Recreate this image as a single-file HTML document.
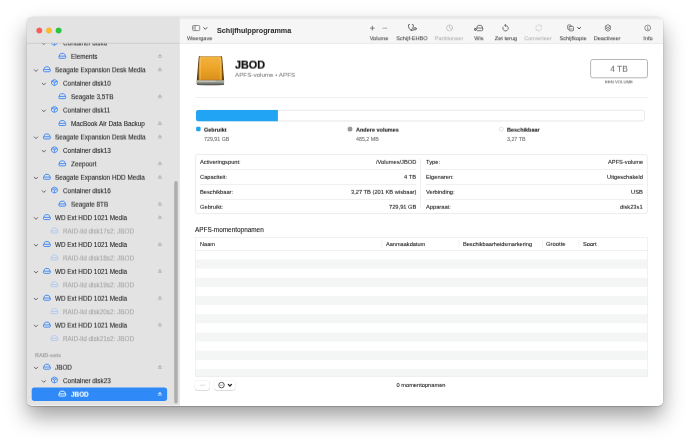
<!DOCTYPE html>
<html><head><meta charset="utf-8"><title>Schijfhulpprogramma</title>
<style>
html,body{margin:0;padding:0;background:#fff;}
body{width:690px;height:441px;position:relative;overflow:hidden;font-family:"Liberation Sans",sans-serif;-webkit-font-smoothing:antialiased;}
#clip div,#clip svg{position:absolute;}
#clip svg.L{left:0;top:0;overflow:hidden;pointer-events:none;}
.t{white-space:nowrap;}
</style></head><body>
<div style="position:absolute;left:26.7px;top:17.2px;width:636.30px;height:388.50px;border-radius:5px;box-shadow:0 0 0.6px 0.3px rgba(0,0,0,0.12),0 0.6px 0.7px rgba(0,0,0,0.13),0 11px 21px rgba(0,0,0,0.37),0 1px 4px rgba(0,0,0,0.05);background:#fff;"></div>
<div id="clip" style="position:absolute;left:0;top:0;width:690px;height:441px;clip-path:inset(17.2px 27.00px 35.30px 26.7px round 5px);">
<svg class="L" width="690" height="441" viewBox="0 0 690 441"><defs><filter id="bsh" x="-20%" y="-30%" width="140%" height="170%"><feGaussianBlur stdDeviation="0.55"/></filter></defs><rect x="26.70" y="17.20" width="153.00" height="388.50" rx="0.00" fill="#e3e3e4"/><rect x="179.70" y="17.20" width="483.30" height="388.50" rx="0.00" fill="#ffffff"/><rect x="179.70" y="17.20" width="483.30" height="26.00" rx="0.00" fill="#f6f6f6"/><rect x="179.70" y="42.90" width="483.30" height="0.60" rx="0.00" fill="#dcdcdc"/><rect x="26.70" y="17.20" width="636.30" height="1.30" rx="0.00" fill="#e0e0e1"/><rect x="179.70" y="18.50" width="483.30" height="0.70" rx="0.00" fill="#ebebeb"/><rect x="179.40" y="17.20" width="0.40" height="388.50" rx="0.00" fill="#dcdcdd"/><g transform="translate(42.168 42.853) scale(1.0000 1.0000)"><path d="M0 0 L1.6320000000000001 1.734 L3.2640000000000002 0" fill="none" stroke="#58585a" stroke-width="0.88" stroke-linecap="round" stroke-linejoin="round"/></g><g transform="translate(51.000 38.720) scale(1.0000 1.0000)"><g fill="none" stroke="#2d7df6" stroke-width="0.8" stroke-linejoin="round"><path d="M3.4 0.5 Q3.65 0.5 3.9 0.65 L5.95 1.8 Q6.3 2.0 6.3 2.4 L6.3 4.6 Q6.3 5.0 5.95 5.2 L3.9 6.35 Q3.4 6.6 2.9 6.35 L0.85 5.2 Q0.5 5.0 0.5 4.6 L0.5 2.4 Q0.5 2.0 0.85 1.8 L2.9 0.65 Q3.15 0.5 3.4 0.5 Z"/><path d="M0.7 2.1 L3.4 3.6 L6.1 2.1 M3.4 3.6 L3.4 6.4"/><path d="M2.0 1.2 L4.8 2.8" stroke-width="0.65"/></g></g></svg>
<div class="t" style="top:39px;font-size:6.36px;line-height:7.63px;color:#232324;font-weight:400;-webkit-text-stroke:0.08px #232324;left:62.90px;transform:perspective(500px) translate3d(0,0.40px,0.01px);">Container disk6</div>
<svg class="L" width="690" height="441" viewBox="0 0 690 441"><g transform="translate(58.400 52.960) scale(1.0000 1.0000)"><g fill="none" stroke="#2d7df6" stroke-width="0.85" stroke-linejoin="round" opacity="1.0"><path d="M0.55 3.6 L1.55 1.25 Q1.95 0.45 2.8 0.45 L5.0 0.45 Q5.85 0.45 6.25 1.25 L7.25 3.6"/><rect x="0.45" y="3.15" width="6.9" height="2.2" rx="0.95"/></g></g></svg>
<div class="t" style="top:52px;font-size:6.36px;line-height:7.63px;color:#232324;font-weight:400;-webkit-text-stroke:0.08px #232324;left:70.70px;transform:perspective(500px) translate3d(0,0.84px,0.01px);">Elements</div>
<svg class="L" width="690" height="441" viewBox="0 0 690 441"><g transform="translate(157.700 53.910) scale(1.0000 1.0000)"><path d="M2.2 0.1 L4.2 2.45 L0.2 2.45 Z" fill="#b8b8ba" stroke="#b8b8ba" stroke-width="0.2" stroke-linejoin="round"/><rect x="0.2" y="3.0" width="4.0" height="0.9" rx="0.25" fill="#b8b8ba"/></g><g transform="translate(34.268 69.733) scale(1.0000 1.0000)"><path d="M0 0 L1.6320000000000001 1.734 L3.2640000000000002 0" fill="none" stroke="#58585a" stroke-width="0.88" stroke-linecap="round" stroke-linejoin="round"/></g><g transform="translate(43.000 66.400) scale(1.0000 1.0000)"><g fill="none" stroke="#2d7df6" stroke-width="0.85" stroke-linejoin="round" opacity="1.0"><path d="M0.55 3.6 L1.55 1.25 Q1.95 0.45 2.8 0.45 L5.0 0.45 Q5.85 0.45 6.25 1.25 L7.25 3.6"/><rect x="0.45" y="3.15" width="6.9" height="2.2" rx="0.95"/></g></g></svg>
<div class="t" style="top:66px;font-size:6.36px;line-height:7.63px;color:#232324;font-weight:400;-webkit-text-stroke:0.08px #232324;left:55.40px;transform:perspective(500px) translate3d(0,0.28px,0.01px);">Seagate Expansion Desk Media</div>
<svg class="L" width="690" height="441" viewBox="0 0 690 441"><g transform="translate(157.700 67.350) scale(1.0000 1.0000)"><path d="M2.2 0.1 L4.2 2.45 L0.2 2.45 Z" fill="#b8b8ba" stroke="#b8b8ba" stroke-width="0.2" stroke-linejoin="round"/><rect x="0.2" y="3.0" width="4.0" height="0.9" rx="0.25" fill="#b8b8ba"/></g><g transform="translate(42.168 83.173) scale(1.0000 1.0000)"><path d="M0 0 L1.6320000000000001 1.734 L3.2640000000000002 0" fill="none" stroke="#58585a" stroke-width="0.88" stroke-linecap="round" stroke-linejoin="round"/></g><g transform="translate(51.000 79.040) scale(1.0000 1.0000)"><g fill="none" stroke="#2d7df6" stroke-width="0.8" stroke-linejoin="round"><path d="M3.4 0.5 Q3.65 0.5 3.9 0.65 L5.95 1.8 Q6.3 2.0 6.3 2.4 L6.3 4.6 Q6.3 5.0 5.95 5.2 L3.9 6.35 Q3.4 6.6 2.9 6.35 L0.85 5.2 Q0.5 5.0 0.5 4.6 L0.5 2.4 Q0.5 2.0 0.85 1.8 L2.9 0.65 Q3.15 0.5 3.4 0.5 Z"/><path d="M0.7 2.1 L3.4 3.6 L6.1 2.1 M3.4 3.6 L3.4 6.4"/><path d="M2.0 1.2 L4.8 2.8" stroke-width="0.65"/></g></g></svg>
<div class="t" style="top:79px;font-size:6.36px;line-height:7.63px;color:#232324;font-weight:400;-webkit-text-stroke:0.08px #232324;left:62.90px;transform:perspective(500px) translate3d(0,0.72px,0.01px);">Container disk10</div>
<svg class="L" width="690" height="441" viewBox="0 0 690 441"><g transform="translate(58.400 93.280) scale(1.0000 1.0000)"><g fill="none" stroke="#2d7df6" stroke-width="0.85" stroke-linejoin="round" opacity="1.0"><path d="M0.55 3.6 L1.55 1.25 Q1.95 0.45 2.8 0.45 L5.0 0.45 Q5.85 0.45 6.25 1.25 L7.25 3.6"/><rect x="0.45" y="3.15" width="6.9" height="2.2" rx="0.95"/></g></g></svg>
<div class="t" style="top:93px;font-size:6.36px;line-height:7.63px;color:#232324;font-weight:400;-webkit-text-stroke:0.08px #232324;left:70.70px;transform:perspective(500px) translate3d(0,0.16px,0.01px);">Seagate 3,5TB</div>
<svg class="L" width="690" height="441" viewBox="0 0 690 441"><g transform="translate(157.700 94.230) scale(1.0000 1.0000)"><path d="M2.2 0.1 L4.2 2.45 L0.2 2.45 Z" fill="#b8b8ba" stroke="#b8b8ba" stroke-width="0.2" stroke-linejoin="round"/><rect x="0.2" y="3.0" width="4.0" height="0.9" rx="0.25" fill="#b8b8ba"/></g><g transform="translate(42.168 110.053) scale(1.0000 1.0000)"><path d="M0 0 L1.6320000000000001 1.734 L3.2640000000000002 0" fill="none" stroke="#58585a" stroke-width="0.88" stroke-linecap="round" stroke-linejoin="round"/></g><g transform="translate(51.000 105.920) scale(1.0000 1.0000)"><g fill="none" stroke="#2d7df6" stroke-width="0.8" stroke-linejoin="round"><path d="M3.4 0.5 Q3.65 0.5 3.9 0.65 L5.95 1.8 Q6.3 2.0 6.3 2.4 L6.3 4.6 Q6.3 5.0 5.95 5.2 L3.9 6.35 Q3.4 6.6 2.9 6.35 L0.85 5.2 Q0.5 5.0 0.5 4.6 L0.5 2.4 Q0.5 2.0 0.85 1.8 L2.9 0.65 Q3.15 0.5 3.4 0.5 Z"/><path d="M0.7 2.1 L3.4 3.6 L6.1 2.1 M3.4 3.6 L3.4 6.4"/><path d="M2.0 1.2 L4.8 2.8" stroke-width="0.65"/></g></g></svg>
<div class="t" style="top:106px;font-size:6.36px;line-height:7.63px;color:#232324;font-weight:400;-webkit-text-stroke:0.08px #232324;left:62.90px;transform:perspective(500px) translate3d(0,0.60px,0.01px);">Container disk11</div>
<svg class="L" width="690" height="441" viewBox="0 0 690 441"><g transform="translate(58.400 120.160) scale(1.0000 1.0000)"><g fill="none" stroke="#2d7df6" stroke-width="0.85" stroke-linejoin="round" opacity="1.0"><path d="M0.55 3.6 L1.55 1.25 Q1.95 0.45 2.8 0.45 L5.0 0.45 Q5.85 0.45 6.25 1.25 L7.25 3.6"/><rect x="0.45" y="3.15" width="6.9" height="2.2" rx="0.95"/></g></g></svg>
<div class="t" style="top:120px;font-size:6.36px;line-height:7.63px;color:#232324;font-weight:400;-webkit-text-stroke:0.08px #232324;left:70.70px;transform:perspective(500px) translate3d(0,0.04px,0.01px);">MacBook Air Data Backup</div>
<svg class="L" width="690" height="441" viewBox="0 0 690 441"><g transform="translate(157.700 121.110) scale(1.0000 1.0000)"><path d="M2.2 0.1 L4.2 2.45 L0.2 2.45 Z" fill="#b8b8ba" stroke="#b8b8ba" stroke-width="0.2" stroke-linejoin="round"/><rect x="0.2" y="3.0" width="4.0" height="0.9" rx="0.25" fill="#b8b8ba"/></g><g transform="translate(34.268 136.933) scale(1.0000 1.0000)"><path d="M0 0 L1.6320000000000001 1.734 L3.2640000000000002 0" fill="none" stroke="#58585a" stroke-width="0.88" stroke-linecap="round" stroke-linejoin="round"/></g><g transform="translate(43.000 133.600) scale(1.0000 1.0000)"><g fill="none" stroke="#2d7df6" stroke-width="0.85" stroke-linejoin="round" opacity="1.0"><path d="M0.55 3.6 L1.55 1.25 Q1.95 0.45 2.8 0.45 L5.0 0.45 Q5.85 0.45 6.25 1.25 L7.25 3.6"/><rect x="0.45" y="3.15" width="6.9" height="2.2" rx="0.95"/></g></g></svg>
<div class="t" style="top:133px;font-size:6.36px;line-height:7.63px;color:#232324;font-weight:400;-webkit-text-stroke:0.08px #232324;left:55.40px;transform:perspective(500px) translate3d(0,0.48px,0.01px);">Seagate Expansion Desk Media</div>
<svg class="L" width="690" height="441" viewBox="0 0 690 441"><g transform="translate(157.700 134.550) scale(1.0000 1.0000)"><path d="M2.2 0.1 L4.2 2.45 L0.2 2.45 Z" fill="#b8b8ba" stroke="#b8b8ba" stroke-width="0.2" stroke-linejoin="round"/><rect x="0.2" y="3.0" width="4.0" height="0.9" rx="0.25" fill="#b8b8ba"/></g><g transform="translate(42.168 150.373) scale(1.0000 1.0000)"><path d="M0 0 L1.6320000000000001 1.734 L3.2640000000000002 0" fill="none" stroke="#58585a" stroke-width="0.88" stroke-linecap="round" stroke-linejoin="round"/></g><g transform="translate(51.000 146.240) scale(1.0000 1.0000)"><g fill="none" stroke="#2d7df6" stroke-width="0.8" stroke-linejoin="round"><path d="M3.4 0.5 Q3.65 0.5 3.9 0.65 L5.95 1.8 Q6.3 2.0 6.3 2.4 L6.3 4.6 Q6.3 5.0 5.95 5.2 L3.9 6.35 Q3.4 6.6 2.9 6.35 L0.85 5.2 Q0.5 5.0 0.5 4.6 L0.5 2.4 Q0.5 2.0 0.85 1.8 L2.9 0.65 Q3.15 0.5 3.4 0.5 Z"/><path d="M0.7 2.1 L3.4 3.6 L6.1 2.1 M3.4 3.6 L3.4 6.4"/><path d="M2.0 1.2 L4.8 2.8" stroke-width="0.65"/></g></g></svg>
<div class="t" style="top:146px;font-size:6.36px;line-height:7.63px;color:#232324;font-weight:400;-webkit-text-stroke:0.08px #232324;left:62.90px;transform:perspective(500px) translate3d(0,0.92px,0.01px);">Container disk13</div>
<svg class="L" width="690" height="441" viewBox="0 0 690 441"><g transform="translate(58.400 160.480) scale(1.0000 1.0000)"><g fill="none" stroke="#2d7df6" stroke-width="0.85" stroke-linejoin="round" opacity="1.0"><path d="M0.55 3.6 L1.55 1.25 Q1.95 0.45 2.8 0.45 L5.0 0.45 Q5.85 0.45 6.25 1.25 L7.25 3.6"/><rect x="0.45" y="3.15" width="6.9" height="2.2" rx="0.95"/></g></g></svg>
<div class="t" style="top:160px;font-size:6.36px;line-height:7.63px;color:#232324;font-weight:400;-webkit-text-stroke:0.08px #232324;left:70.70px;transform:perspective(500px) translate3d(0,0.36px,0.01px);">Zeepoort</div>
<svg class="L" width="690" height="441" viewBox="0 0 690 441"><g transform="translate(157.700 161.430) scale(1.0000 1.0000)"><path d="M2.2 0.1 L4.2 2.45 L0.2 2.45 Z" fill="#b8b8ba" stroke="#b8b8ba" stroke-width="0.2" stroke-linejoin="round"/><rect x="0.2" y="3.0" width="4.0" height="0.9" rx="0.25" fill="#b8b8ba"/></g><g transform="translate(34.268 177.253) scale(1.0000 1.0000)"><path d="M0 0 L1.6320000000000001 1.734 L3.2640000000000002 0" fill="none" stroke="#58585a" stroke-width="0.88" stroke-linecap="round" stroke-linejoin="round"/></g><g transform="translate(43.000 173.920) scale(1.0000 1.0000)"><g fill="none" stroke="#2d7df6" stroke-width="0.85" stroke-linejoin="round" opacity="1.0"><path d="M0.55 3.6 L1.55 1.25 Q1.95 0.45 2.8 0.45 L5.0 0.45 Q5.85 0.45 6.25 1.25 L7.25 3.6"/><rect x="0.45" y="3.15" width="6.9" height="2.2" rx="0.95"/></g></g></svg>
<div class="t" style="top:173px;font-size:6.36px;line-height:7.63px;color:#232324;font-weight:400;-webkit-text-stroke:0.08px #232324;left:55.40px;transform:perspective(500px) translate3d(0,0.80px,0.01px);">Seagate Expansion HDD Media</div>
<svg class="L" width="690" height="441" viewBox="0 0 690 441"><g transform="translate(157.700 174.870) scale(1.0000 1.0000)"><path d="M2.2 0.1 L4.2 2.45 L0.2 2.45 Z" fill="#b8b8ba" stroke="#b8b8ba" stroke-width="0.2" stroke-linejoin="round"/><rect x="0.2" y="3.0" width="4.0" height="0.9" rx="0.25" fill="#b8b8ba"/></g><g transform="translate(42.168 190.693) scale(1.0000 1.0000)"><path d="M0 0 L1.6320000000000001 1.734 L3.2640000000000002 0" fill="none" stroke="#58585a" stroke-width="0.88" stroke-linecap="round" stroke-linejoin="round"/></g><g transform="translate(51.000 186.560) scale(1.0000 1.0000)"><g fill="none" stroke="#2d7df6" stroke-width="0.8" stroke-linejoin="round"><path d="M3.4 0.5 Q3.65 0.5 3.9 0.65 L5.95 1.8 Q6.3 2.0 6.3 2.4 L6.3 4.6 Q6.3 5.0 5.95 5.2 L3.9 6.35 Q3.4 6.6 2.9 6.35 L0.85 5.2 Q0.5 5.0 0.5 4.6 L0.5 2.4 Q0.5 2.0 0.85 1.8 L2.9 0.65 Q3.15 0.5 3.4 0.5 Z"/><path d="M0.7 2.1 L3.4 3.6 L6.1 2.1 M3.4 3.6 L3.4 6.4"/><path d="M2.0 1.2 L4.8 2.8" stroke-width="0.65"/></g></g></svg>
<div class="t" style="top:187px;font-size:6.36px;line-height:7.63px;color:#232324;font-weight:400;-webkit-text-stroke:0.08px #232324;left:62.90px;transform:perspective(500px) translate3d(0,0.24px,0.01px);">Container disk16</div>
<svg class="L" width="690" height="441" viewBox="0 0 690 441"><g transform="translate(58.400 200.800) scale(1.0000 1.0000)"><g fill="none" stroke="#2d7df6" stroke-width="0.85" stroke-linejoin="round" opacity="1.0"><path d="M0.55 3.6 L1.55 1.25 Q1.95 0.45 2.8 0.45 L5.0 0.45 Q5.85 0.45 6.25 1.25 L7.25 3.6"/><rect x="0.45" y="3.15" width="6.9" height="2.2" rx="0.95"/></g></g></svg>
<div class="t" style="top:200px;font-size:6.36px;line-height:7.63px;color:#232324;font-weight:400;-webkit-text-stroke:0.08px #232324;left:70.70px;transform:perspective(500px) translate3d(0,0.68px,0.01px);">Seagate 8TB</div>
<svg class="L" width="690" height="441" viewBox="0 0 690 441"><g transform="translate(157.700 201.750) scale(1.0000 1.0000)"><path d="M2.2 0.1 L4.2 2.45 L0.2 2.45 Z" fill="#b8b8ba" stroke="#b8b8ba" stroke-width="0.2" stroke-linejoin="round"/><rect x="0.2" y="3.0" width="4.0" height="0.9" rx="0.25" fill="#b8b8ba"/></g><g transform="translate(34.268 217.573) scale(1.0000 1.0000)"><path d="M0 0 L1.6320000000000001 1.734 L3.2640000000000002 0" fill="none" stroke="#58585a" stroke-width="0.88" stroke-linecap="round" stroke-linejoin="round"/></g><g transform="translate(43.000 214.240) scale(1.0000 1.0000)"><g fill="none" stroke="#2d7df6" stroke-width="0.85" stroke-linejoin="round" opacity="1.0"><path d="M0.55 3.6 L1.55 1.25 Q1.95 0.45 2.8 0.45 L5.0 0.45 Q5.85 0.45 6.25 1.25 L7.25 3.6"/><rect x="0.45" y="3.15" width="6.9" height="2.2" rx="0.95"/></g></g></svg>
<div class="t" style="top:214px;font-size:6.36px;line-height:7.63px;color:#232324;font-weight:400;-webkit-text-stroke:0.08px #232324;left:55.40px;transform:perspective(500px) translate3d(0,0.12px,0.01px);">WD Ext HDD 1021 Media</div>
<svg class="L" width="690" height="441" viewBox="0 0 690 441"><g transform="translate(157.700 215.190) scale(1.0000 1.0000)"><path d="M2.2 0.1 L4.2 2.45 L0.2 2.45 Z" fill="#b8b8ba" stroke="#b8b8ba" stroke-width="0.2" stroke-linejoin="round"/><rect x="0.2" y="3.0" width="4.0" height="0.9" rx="0.25" fill="#b8b8ba"/></g><g transform="translate(50.500 227.680) scale(1.0000 1.0000)"><g fill="none" stroke="#abc6f2" stroke-width="0.85" stroke-linejoin="round" opacity="1.0"><path d="M0.55 3.6 L1.55 1.25 Q1.95 0.45 2.8 0.45 L5.0 0.45 Q5.85 0.45 6.25 1.25 L7.25 3.6"/><rect x="0.45" y="3.15" width="6.9" height="2.2" rx="0.95"/></g></g></svg>
<div class="t" style="top:227px;font-size:6.36px;line-height:7.63px;color:#a4a4a6;font-weight:400;-webkit-text-stroke:0.08px #a4a4a6;left:62.90px;transform:perspective(500px) translate3d(0,0.56px,0.01px);">RAID-lid disk17s2: JBOD</div>
<svg class="L" width="690" height="441" viewBox="0 0 690 441"><g transform="translate(34.268 244.453) scale(1.0000 1.0000)"><path d="M0 0 L1.6320000000000001 1.734 L3.2640000000000002 0" fill="none" stroke="#58585a" stroke-width="0.88" stroke-linecap="round" stroke-linejoin="round"/></g><g transform="translate(43.000 241.120) scale(1.0000 1.0000)"><g fill="none" stroke="#2d7df6" stroke-width="0.85" stroke-linejoin="round" opacity="1.0"><path d="M0.55 3.6 L1.55 1.25 Q1.95 0.45 2.8 0.45 L5.0 0.45 Q5.85 0.45 6.25 1.25 L7.25 3.6"/><rect x="0.45" y="3.15" width="6.9" height="2.2" rx="0.95"/></g></g></svg>
<div class="t" style="top:241px;font-size:6.36px;line-height:7.63px;color:#232324;font-weight:400;-webkit-text-stroke:0.08px #232324;left:55.40px;transform:perspective(500px) translate3d(0,0.00px,0.01px);">WD Ext HDD 1021 Media</div>
<svg class="L" width="690" height="441" viewBox="0 0 690 441"><g transform="translate(157.700 242.070) scale(1.0000 1.0000)"><path d="M2.2 0.1 L4.2 2.45 L0.2 2.45 Z" fill="#b8b8ba" stroke="#b8b8ba" stroke-width="0.2" stroke-linejoin="round"/><rect x="0.2" y="3.0" width="4.0" height="0.9" rx="0.25" fill="#b8b8ba"/></g><g transform="translate(50.500 254.560) scale(1.0000 1.0000)"><g fill="none" stroke="#abc6f2" stroke-width="0.85" stroke-linejoin="round" opacity="1.0"><path d="M0.55 3.6 L1.55 1.25 Q1.95 0.45 2.8 0.45 L5.0 0.45 Q5.85 0.45 6.25 1.25 L7.25 3.6"/><rect x="0.45" y="3.15" width="6.9" height="2.2" rx="0.95"/></g></g></svg>
<div class="t" style="top:254px;font-size:6.36px;line-height:7.63px;color:#a4a4a6;font-weight:400;-webkit-text-stroke:0.08px #a4a4a6;left:62.90px;transform:perspective(500px) translate3d(0,0.44px,0.01px);">RAID-lid disk18s2: JBOD</div>
<svg class="L" width="690" height="441" viewBox="0 0 690 441"><g transform="translate(34.268 271.333) scale(1.0000 1.0000)"><path d="M0 0 L1.6320000000000001 1.734 L3.2640000000000002 0" fill="none" stroke="#58585a" stroke-width="0.88" stroke-linecap="round" stroke-linejoin="round"/></g><g transform="translate(43.000 268.000) scale(1.0000 1.0000)"><g fill="none" stroke="#2d7df6" stroke-width="0.85" stroke-linejoin="round" opacity="1.0"><path d="M0.55 3.6 L1.55 1.25 Q1.95 0.45 2.8 0.45 L5.0 0.45 Q5.85 0.45 6.25 1.25 L7.25 3.6"/><rect x="0.45" y="3.15" width="6.9" height="2.2" rx="0.95"/></g></g></svg>
<div class="t" style="top:267px;font-size:6.36px;line-height:7.63px;color:#232324;font-weight:400;-webkit-text-stroke:0.08px #232324;left:55.40px;transform:perspective(500px) translate3d(0,0.88px,0.01px);">WD Ext HDD 1021 Media</div>
<svg class="L" width="690" height="441" viewBox="0 0 690 441"><g transform="translate(157.700 268.950) scale(1.0000 1.0000)"><path d="M2.2 0.1 L4.2 2.45 L0.2 2.45 Z" fill="#b8b8ba" stroke="#b8b8ba" stroke-width="0.2" stroke-linejoin="round"/><rect x="0.2" y="3.0" width="4.0" height="0.9" rx="0.25" fill="#b8b8ba"/></g><g transform="translate(50.500 281.440) scale(1.0000 1.0000)"><g fill="none" stroke="#abc6f2" stroke-width="0.85" stroke-linejoin="round" opacity="1.0"><path d="M0.55 3.6 L1.55 1.25 Q1.95 0.45 2.8 0.45 L5.0 0.45 Q5.85 0.45 6.25 1.25 L7.25 3.6"/><rect x="0.45" y="3.15" width="6.9" height="2.2" rx="0.95"/></g></g></svg>
<div class="t" style="top:281px;font-size:6.36px;line-height:7.63px;color:#a4a4a6;font-weight:400;-webkit-text-stroke:0.08px #a4a4a6;left:62.90px;transform:perspective(500px) translate3d(0,0.32px,0.01px);">RAID-lid disk19s2: JBOD</div>
<svg class="L" width="690" height="441" viewBox="0 0 690 441"><g transform="translate(34.268 298.213) scale(1.0000 1.0000)"><path d="M0 0 L1.6320000000000001 1.734 L3.2640000000000002 0" fill="none" stroke="#58585a" stroke-width="0.88" stroke-linecap="round" stroke-linejoin="round"/></g><g transform="translate(43.000 294.880) scale(1.0000 1.0000)"><g fill="none" stroke="#2d7df6" stroke-width="0.85" stroke-linejoin="round" opacity="1.0"><path d="M0.55 3.6 L1.55 1.25 Q1.95 0.45 2.8 0.45 L5.0 0.45 Q5.85 0.45 6.25 1.25 L7.25 3.6"/><rect x="0.45" y="3.15" width="6.9" height="2.2" rx="0.95"/></g></g></svg>
<div class="t" style="top:294px;font-size:6.36px;line-height:7.63px;color:#232324;font-weight:400;-webkit-text-stroke:0.08px #232324;left:55.40px;transform:perspective(500px) translate3d(0,0.76px,0.01px);">WD Ext HDD 1021 Media</div>
<svg class="L" width="690" height="441" viewBox="0 0 690 441"><g transform="translate(157.700 295.830) scale(1.0000 1.0000)"><path d="M2.2 0.1 L4.2 2.45 L0.2 2.45 Z" fill="#b8b8ba" stroke="#b8b8ba" stroke-width="0.2" stroke-linejoin="round"/><rect x="0.2" y="3.0" width="4.0" height="0.9" rx="0.25" fill="#b8b8ba"/></g><g transform="translate(50.500 308.320) scale(1.0000 1.0000)"><g fill="none" stroke="#abc6f2" stroke-width="0.85" stroke-linejoin="round" opacity="1.0"><path d="M0.55 3.6 L1.55 1.25 Q1.95 0.45 2.8 0.45 L5.0 0.45 Q5.85 0.45 6.25 1.25 L7.25 3.6"/><rect x="0.45" y="3.15" width="6.9" height="2.2" rx="0.95"/></g></g></svg>
<div class="t" style="top:308px;font-size:6.36px;line-height:7.63px;color:#a4a4a6;font-weight:400;-webkit-text-stroke:0.08px #a4a4a6;left:62.90px;transform:perspective(500px) translate3d(0,0.20px,0.01px);">RAID-lid disk20s2: JBOD</div>
<svg class="L" width="690" height="441" viewBox="0 0 690 441"><g transform="translate(34.268 325.093) scale(1.0000 1.0000)"><path d="M0 0 L1.6320000000000001 1.734 L3.2640000000000002 0" fill="none" stroke="#58585a" stroke-width="0.88" stroke-linecap="round" stroke-linejoin="round"/></g><g transform="translate(43.000 321.760) scale(1.0000 1.0000)"><g fill="none" stroke="#2d7df6" stroke-width="0.85" stroke-linejoin="round" opacity="1.0"><path d="M0.55 3.6 L1.55 1.25 Q1.95 0.45 2.8 0.45 L5.0 0.45 Q5.85 0.45 6.25 1.25 L7.25 3.6"/><rect x="0.45" y="3.15" width="6.9" height="2.2" rx="0.95"/></g></g></svg>
<div class="t" style="top:321px;font-size:6.36px;line-height:7.63px;color:#232324;font-weight:400;-webkit-text-stroke:0.08px #232324;left:55.40px;transform:perspective(500px) translate3d(0,0.64px,0.01px);">WD Ext HDD 1021 Media</div>
<svg class="L" width="690" height="441" viewBox="0 0 690 441"><g transform="translate(157.700 322.710) scale(1.0000 1.0000)"><path d="M2.2 0.1 L4.2 2.45 L0.2 2.45 Z" fill="#b8b8ba" stroke="#b8b8ba" stroke-width="0.2" stroke-linejoin="round"/><rect x="0.2" y="3.0" width="4.0" height="0.9" rx="0.25" fill="#b8b8ba"/></g><g transform="translate(50.500 335.200) scale(1.0000 1.0000)"><g fill="none" stroke="#abc6f2" stroke-width="0.85" stroke-linejoin="round" opacity="1.0"><path d="M0.55 3.6 L1.55 1.25 Q1.95 0.45 2.8 0.45 L5.0 0.45 Q5.85 0.45 6.25 1.25 L7.25 3.6"/><rect x="0.45" y="3.15" width="6.9" height="2.2" rx="0.95"/></g></g></svg>
<div class="t" style="top:335px;font-size:6.36px;line-height:7.63px;color:#a4a4a6;font-weight:400;-webkit-text-stroke:0.08px #a4a4a6;left:62.90px;transform:perspective(500px) translate3d(0,0.08px,0.01px);">RAID-lid disk21s2: JBOD</div>
<div class="t" style="top:352px;font-size:5.45px;line-height:6.54px;color:#a2a2a4;font-weight:700;-webkit-text-stroke:0.08px #a2a2a4;left:34.50px;transform:perspective(500px) translate3d(0,0.18px,0.01px);">RAID-sets</div>
<svg class="L" width="690" height="441" viewBox="0 0 690 441"><g transform="translate(34.268 367.183) scale(1.0000 1.0000)"><path d="M0 0 L1.6320000000000001 1.734 L3.2640000000000002 0" fill="none" stroke="#58585a" stroke-width="0.88" stroke-linecap="round" stroke-linejoin="round"/></g><g transform="translate(43.000 363.850) scale(1.0000 1.0000)"><g fill="none" stroke="#2d7df6" stroke-width="0.85" stroke-linejoin="round" opacity="1.0"><path d="M0.55 3.6 L1.55 1.25 Q1.95 0.45 2.8 0.45 L5.0 0.45 Q5.85 0.45 6.25 1.25 L7.25 3.6"/><rect x="0.45" y="3.15" width="6.9" height="2.2" rx="0.95"/></g></g></svg>
<div class="t" style="top:363px;font-size:6.36px;line-height:7.63px;color:#232324;font-weight:400;-webkit-text-stroke:0.08px #232324;left:55.40px;transform:perspective(500px) translate3d(0,0.73px,0.01px);">JBOD</div>
<svg class="L" width="690" height="441" viewBox="0 0 690 441"><g transform="translate(157.700 364.800) scale(1.0000 1.0000)"><path d="M2.2 0.1 L4.2 2.45 L0.2 2.45 Z" fill="#b8b8ba" stroke="#b8b8ba" stroke-width="0.2" stroke-linejoin="round"/><rect x="0.2" y="3.0" width="4.0" height="0.9" rx="0.25" fill="#b8b8ba"/></g><g transform="translate(42.168 380.633) scale(1.0000 1.0000)"><path d="M0 0 L1.6320000000000001 1.734 L3.2640000000000002 0" fill="none" stroke="#58585a" stroke-width="0.88" stroke-linecap="round" stroke-linejoin="round"/></g><g transform="translate(51.000 376.500) scale(1.0000 1.0000)"><g fill="none" stroke="#2d7df6" stroke-width="0.8" stroke-linejoin="round"><path d="M3.4 0.5 Q3.65 0.5 3.9 0.65 L5.95 1.8 Q6.3 2.0 6.3 2.4 L6.3 4.6 Q6.3 5.0 5.95 5.2 L3.9 6.35 Q3.4 6.6 2.9 6.35 L0.85 5.2 Q0.5 5.0 0.5 4.6 L0.5 2.4 Q0.5 2.0 0.85 1.8 L2.9 0.65 Q3.15 0.5 3.4 0.5 Z"/><path d="M0.7 2.1 L3.4 3.6 L6.1 2.1 M3.4 3.6 L3.4 6.4"/><path d="M2.0 1.2 L4.8 2.8" stroke-width="0.65"/></g></g></svg>
<div class="t" style="top:377px;font-size:6.36px;line-height:7.63px;color:#232324;font-weight:400;-webkit-text-stroke:0.08px #232324;left:62.90px;transform:perspective(500px) translate3d(0,0.18px,0.01px);">Container disk23</div>
<svg class="L" width="690" height="441" viewBox="0 0 690 441"><rect x="31.70" y="387.40" width="135.40" height="13.50" rx="2.60" fill="#2f8af7"/><g transform="translate(58.400 390.750) scale(1.0000 1.0000)"><g fill="none" stroke="#ffffff" stroke-width="0.85" stroke-linejoin="round" opacity="1.0"><path d="M0.55 3.6 L1.55 1.25 Q1.95 0.45 2.8 0.45 L5.0 0.45 Q5.85 0.45 6.25 1.25 L7.25 3.6"/><rect x="0.45" y="3.15" width="6.9" height="2.2" rx="0.95"/></g></g></svg>
<div class="t" style="top:390px;font-size:6.36px;line-height:7.63px;color:#ffffff;font-weight:700;-webkit-text-stroke:0.08px #ffffff;left:70.70px;transform:perspective(500px) translate3d(0,0.63px,0.01px);">JBOD</div>
<svg class="L" width="690" height="441" viewBox="0 0 690 441"><g transform="translate(157.700 391.700) scale(1.0000 1.0000)"><path d="M2.2 0.1 L4.2 2.45 L0.2 2.45 Z" fill="#c6dcfc" stroke="#c6dcfc" stroke-width="0.2" stroke-linejoin="round"/><rect x="0.2" y="3.0" width="4.0" height="0.9" rx="0.25" fill="#c6dcfc"/></g><rect x="26.70" y="17.20" width="152.60" height="25.70" rx="0.00" fill="#e3e3e4"/><rect x="26.70" y="42.85" width="152.60" height="0.70" rx="0.00" fill="#c4c4c5"/><rect x="36.55" y="27.85" width="5.50" height="5.50" rx="2.75" fill="#fe5f57" stroke="#e2463f" stroke-width="0.3"/><rect x="46.20" y="27.85" width="5.50" height="5.50" rx="2.75" fill="#febc2e" stroke="#dfa023" stroke-width="0.3"/><rect x="55.85" y="27.85" width="5.50" height="5.50" rx="2.75" fill="#28c840" stroke="#1dad2b" stroke-width="0.3"/><rect x="174.20" y="180.90" width="3.50" height="222.50" rx="1.75" fill="#adadae"/><g transform="translate(192.200 25.200) scale(1.0000 1.0000)"><g fill="none" stroke="#505050" stroke-width="0.6"><rect x="0.3" y="0.3" width="7.2" height="5.1" rx="1"/><path d="M2.9 0.3 V5.4"/><path d="M1.0 1.6 H2.1 M1.0 2.6 H2.1 M1.0 3.6 H2.1" stroke-width="0.45"/></g></g><g transform="translate(203.700 27.600) scale(1.0000 1.0000)"><path d="M0 0 L1.6 1.7 L3.2 0" fill="none" stroke="#505050" stroke-width="0.95" stroke-linecap="round" stroke-linejoin="round"/></g></svg>
<div class="t" style="top:35px;font-size:5.6px;line-height:6.72px;color:#4c4c4c;font-weight:400;-webkit-text-stroke:0.08px #4c4c4c;left:187.20px;transform:perspective(500px) translate3d(0,0.24px,0.01px);">Weergave</div>
<div class="t" style="top:26px;font-size:7.18px;line-height:8.62px;color:#333;font-weight:700;-webkit-text-stroke:0.08px #333;left:217.20px;transform:perspective(500px) translate3d(0,0.94px,0.01px);">Schijfhulpprogramma</div>
<svg class="L" width="690" height="441" viewBox="0 0 690 441"><g transform="translate(369.750 25.550) scale(1.0000 1.0000)"><path d="M2.6 0.3 V4.9 M0.3 2.6 H4.9" stroke="#505050" stroke-width="0.72" fill="none"/></g><rect x="378.60" y="24.60" width="0.40" height="6.80" rx="0.00" fill="#ececec"/><g transform="translate(382.200 25.600) scale(1.0000 1.0000)"><path d="M0.2 2.6 H5.0" stroke="#8e8e8e" stroke-width="0.72" fill="none"/></g></svg>
<div class="t" style="top:35px;font-size:5.6px;line-height:6.72px;color:#4c4c4c;font-weight:400;-webkit-text-stroke:0.08px #4c4c4c;left:278.75px;width:200px;text-align:center;transform:perspective(500px) translate3d(0,0.24px,0.01px);">Volume</div>
<svg class="L" width="690" height="441" viewBox="0 0 690 441"><g transform="translate(408.000 24.000) scale(1.0000 1.0000)"><g fill="none" stroke="#505050" stroke-width="0.9" stroke-linecap="round" stroke-linejoin="round"><path d="M1.45 0.55 H1.0 Q0.5 0.55 0.5 1.05 V2.5 Q0.5 4.6 3.0 6.3"/><path d="M4.3 0.55 H4.8 Q5.3 0.55 5.3 1.05 V2.5 Q5.3 4.4 3.0 6.3 Q4.6 6.9 6.0 5.75" /><circle cx="7.1" cy="4.75" r="1.2" stroke-width="0.8"/></g></g></svg>
<div class="t" style="top:35px;font-size:5.6px;line-height:6.72px;color:#4c4c4c;font-weight:400;-webkit-text-stroke:0.08px #4c4c4c;left:312.00px;width:200px;text-align:center;transform:perspective(500px) translate3d(0,0.24px,0.01px);">Schijf-EHBO</div>
<svg class="L" width="690" height="441" viewBox="0 0 690 441"><g transform="translate(446.050 24.400) scale(1.0000 1.0000)"><g fill="none" stroke="#b6b6b6" stroke-width="0.7" stroke-linecap="round"><circle cx="3.5" cy="3.5" r="3.0"/><path d="M3.5 1.4 V3.5 L5.0 4.6"/></g></g></svg>
<div class="t" style="top:35px;font-size:5.6px;line-height:6.72px;color:#b6b6b6;font-weight:400;-webkit-text-stroke:0.08px #b6b6b6;left:349.30px;width:200px;text-align:center;transform:perspective(500px) translate3d(0,0.24px,0.01px);">Partitioneer</div>
<svg class="L" width="690" height="441" viewBox="0 0 690 441"><g transform="translate(474.000 24.900) scale(1.0000 1.0000)"><g fill="none" stroke="#505050" stroke-width="0.78" stroke-linejoin="round" stroke-linecap="round"><path d="M2.75 3.0 L3.4 1.25 Q3.7 0.5 4.5 0.5 L6.85 0.5 Q7.65 0.5 7.95 1.25 L8.7 3.6"/><path d="M3.3 3.15 H7.7 Q8.75 3.15 8.75 4.2 V4.75 Q8.75 5.8 7.7 5.8 H3.4"/></g><circle cx="1.45" cy="4.5" r="1.35" fill="#505050"/><path d="M0.95 4.0 L1.95 5.0 M1.95 4.0 L0.95 5.0" stroke="#f6f6f6" stroke-width="0.42" fill="none"/></g></svg>
<div class="t" style="top:35px;font-size:5.6px;line-height:6.72px;color:#4c4c4c;font-weight:400;-webkit-text-stroke:0.08px #4c4c4c;left:379.20px;width:200px;text-align:center;transform:perspective(500px) translate3d(0,0.24px,0.01px);">Wis</div>
<svg class="L" width="690" height="441" viewBox="0 0 690 441"><g transform="translate(502.050 23.900) scale(1.0000 1.0000)"><g fill="none" stroke="#505050" stroke-width="0.75" stroke-linecap="round" stroke-linejoin="round"><path d="M3.0 1.6 A2.75 2.75 0 1 1 1.0 3.1"/><path d="M3.6 0.4 L2.6 1.5 L3.8 2.5"/></g></g></svg>
<div class="t" style="top:35px;font-size:5.6px;line-height:6.72px;color:#4c4c4c;font-weight:400;-webkit-text-stroke:0.08px #4c4c4c;left:405.85px;width:200px;text-align:center;transform:perspective(500px) translate3d(0,0.24px,0.01px);">Zet terug</div>
<svg class="L" width="690" height="441" viewBox="0 0 690 441"><g transform="translate(535.200 24.400) scale(1.0000 1.0000)"><g fill="none" stroke="#c6c6c6" stroke-width="0.65" stroke-linecap="round"><path d="M0.55 3.2 A3.0 3.0 0 0 1 6.0 1.8"/><path d="M6.45 3.8 A3.0 3.0 0 0 1 1.0 5.2"/><path d="M6.15 1.0 V1.9 H5.25 M0.85 6.0 V5.1 H1.75"/></g></g></svg>
<div class="t" style="top:35px;font-size:5.6px;line-height:6.72px;color:#b6b6b6;font-weight:400;-webkit-text-stroke:0.08px #b6b6b6;left:438.45px;width:200px;text-align:center;transform:perspective(500px) translate3d(0,0.24px,0.01px);">Converteer</div>
<svg class="L" width="690" height="441" viewBox="0 0 690 441"><g transform="translate(567.200 24.500) scale(1.0000 1.0000)"><g fill="none" stroke="#505050" stroke-width="0.7" stroke-linejoin="round" stroke-linecap="round"><path d="M1.7 4.9 H1.3 Q0.45 4.9 0.45 4.05 V1.3 Q0.45 0.45 1.3 0.45 H3.0 Q3.4 0.45 3.7 0.75 L4.6 1.65"/><rect x="2.0" y="1.9" width="4.3" height="4.45" rx="0.85"/><path d="M3.2 4.5 H5.1" stroke-width="0.55"/></g></g><g transform="translate(577.790 27.477) scale(1.0000 1.0000)"><path d="M0 0 L1.36 1.4449999999999998 L2.72 0" fill="none" stroke="#333" stroke-width="0.95" stroke-linecap="round" stroke-linejoin="round"/></g></svg>
<div class="t" style="top:35px;font-size:5.6px;line-height:6.72px;color:#4c4c4c;font-weight:400;-webkit-text-stroke:0.08px #4c4c4c;left:473.30px;width:200px;text-align:center;transform:perspective(500px) translate3d(0,0.24px,0.01px);">Schijfkopie</div>
<svg class="L" width="690" height="441" viewBox="0 0 690 441"><g transform="translate(604.800 24.050) scale(1.0000 1.0000)"><g fill="none" stroke="#7a7a7a" stroke-width="0.9" stroke-linejoin="round"><path d="M3.1 0.55 L5.65 2.05 L3.1 3.55 L0.55 2.05 Z"/><path d="M0.55 3.85 L3.1 5.35 L5.65 3.85"/><path d="M0.55 5.7 L3.1 7.2 L5.65 5.7"/><path d="M0.55 2.05 V5.7 M5.65 2.05 V5.7" stroke-width="0.8"/></g></g></svg>
<div class="t" style="top:35px;font-size:5.6px;line-height:6.72px;color:#4c4c4c;font-weight:400;-webkit-text-stroke:0.08px #4c4c4c;left:507.45px;width:200px;text-align:center;transform:perspective(500px) translate3d(0,0.24px,0.01px);">Deactiveer</div>
<svg class="L" width="690" height="441" viewBox="0 0 690 441"><g transform="translate(644.400 24.700) scale(1.0000 1.0000)"><g fill="none" stroke="#505050" stroke-width="0.6"><circle cx="3.3" cy="3.3" r="2.9"/></g><circle cx="3.3" cy="1.9" r="0.42" fill="#505050"/><path d="M2.7 2.9 H3.45 V4.7 M2.6 4.75 H4.2" stroke="#505050" stroke-width="0.5" fill="none"/></g></svg>
<div class="t" style="top:35px;font-size:5.6px;line-height:6.72px;color:#4c4c4c;font-weight:400;-webkit-text-stroke:0.08px #4c4c4c;left:547.80px;width:200px;text-align:center;transform:perspective(500px) translate3d(0,0.24px,0.01px);">Info</div>
<svg class="L" width="690" height="441" viewBox="0 0 690 441"><g transform="translate(196.500 55.500) scale(1.0000 1.0000)"><defs><linearGradient id="og" x1="0" y1="0" x2="0" y2="1"><stop offset="0" stop-color="#f2b340"/><stop offset="0.45" stop-color="#eda629"/><stop offset="1" stop-color="#d98f1a"/></linearGradient><linearGradient id="eg" x1="0" y1="0" x2="1" y2="0"><stop offset="0" stop-color="#472a03" stop-opacity="0.95"/><stop offset="0.04" stop-color="#5a3706" stop-opacity="0.7"/><stop offset="0.085" stop-color="#ffd98a" stop-opacity="0.55"/><stop offset="0.15" stop-color="#ffd37a" stop-opacity="0"/><stop offset="0.85" stop-color="#ffd37a" stop-opacity="0"/><stop offset="0.915" stop-color="#ffd98a" stop-opacity="0.45"/><stop offset="0.96" stop-color="#5a3706" stop-opacity="0.7"/><stop offset="1" stop-color="#472a03" stop-opacity="0.95"/></linearGradient><linearGradient id="bg" x1="0" y1="0" x2="0" y2="1"><stop offset="0" stop-color="#d2d2cc"/><stop offset="0.35" stop-color="#a3a39d"/><stop offset="0.8" stop-color="#6f6f69"/><stop offset="1" stop-color="#4d4d48"/></linearGradient><filter id="dsh" x="-20%" y="-200%" width="140%" height="500%"><feGaussianBlur stdDeviation="0.7"/></filter></defs><ellipse cx="13.9" cy="29.3" rx="13.2" ry="0.9" fill="#000" opacity="0.28" filter="url(#dsh)"/><path d="M3.5 0.4 H24.4 Q25.5 0.4 25.65 1.5 L27.55 24.4 V27.9 Q27.55 29.4 26.05 29.4 H1.8 Q0.3 29.4 0.3 27.9 V24.4 L2.25 1.5 Q2.4 0.4 3.5 0.4 Z" fill="#573405"/><path d="M3.75 1.0 H24.15 Q24.75 1.0 24.82 1.6 L26.65 24.9 H1.2 L3.08 1.6 Q3.15 1.0 3.75 1.0 Z" fill="url(#og)"/><path d="M3.75 1.0 H24.15 Q24.75 1.0 24.82 1.6 L26.65 24.9 H1.2 L3.08 1.6 Q3.15 1.0 3.75 1.0 Z" fill="url(#eg)"/><path d="M3.9 1.05 H24.0" stroke="#fff3d6" stroke-width="0.55" opacity="0.8" fill="none"/><path d="M0.3 24.8 H27.55 V27.9 Q27.55 29.4 26.05 29.4 H1.8 Q0.3 29.4 0.3 27.9 Z" fill="url(#bg)"/><path d="M0.3 24.7 H27.55" stroke="#6b4a17" stroke-width="0.5" opacity="0.7" fill="none"/><path d="M1.2 25.6 H19" stroke="#fff" stroke-width="0.6" opacity="0.55" fill="none"/><circle cx="24.9" cy="26.4" r="0.95" fill="#59f07a" opacity="0.35"/><circle cx="24.9" cy="26.4" r="0.6" fill="#35d653"/></g></svg>
<div class="t" style="top:58px;font-size:10.85px;line-height:13.02px;color:#111;font-weight:700;-webkit-text-stroke:0.08px #111;-webkit-text-stroke:0.22px #111;left:234.50px;transform:perspective(500px) translate3d(0,0.59px,0.01px);">JBOD</div>
<div class="t" style="top:70px;font-size:6.25px;line-height:7.50px;color:#808080;font-weight:400;-webkit-text-stroke:0.08px #808080;left:234.60px;transform:perspective(500px) translate3d(0,0.80px,0.01px);">APFS-volume • APFS</div>
<svg class="L" width="690" height="441" viewBox="0 0 690 441"><rect x="590.60" y="59.50" width="56.90" height="18.30" rx="2.20" fill="#fff" stroke="#a2a2a2" stroke-width="0.8"/></svg>
<div class="t" style="top:63px;font-size:8.45px;line-height:10.14px;color:#6f6f6f;font-weight:400;-webkit-text-stroke:0.08px #6f6f6f;left:519.10px;width:200px;text-align:center;transform:perspective(500px) translate3d(0,0.73px,0.01px);">4 TB</div>
<div class="t" style="top:79px;font-size:4.25px;line-height:5.10px;color:#6c6c6c;font-weight:400;-webkit-text-stroke:0.08px #6c6c6c;left:519.10px;width:200px;text-align:center;transform:perspective(500px) translate3d(0,0.35px,0.01px);">EEN VOLUME</div>
<svg class="L" width="690" height="441" viewBox="0 0 690 441"><rect x="195.20" y="97.10" width="452.60" height="0.60" rx="0.00" fill="#e6e6e6"/><rect x="196.30" y="110.25" width="448.20" height="10.70" rx="1.90" fill="#fff" stroke="#d9d9d9" stroke-width="0.6"/><path d="M198.20 109.95 H277.90 V121.25 H198.20 A2.2 2.2 0 0 1 196.00 119.05 V112.15 A2.2 2.2 0 0 1 198.20 109.95 Z" fill="#21a4f3"/><rect x="196.10" y="126.80" width="4.50" height="4.50" rx="1.25" fill="#21a4f3"/></svg>
<div class="t" style="top:126px;font-size:5.5px;line-height:6.60px;color:#111;font-weight:700;-webkit-text-stroke:0.08px #111;left:204.00px;transform:perspective(500px) translate3d(0,0.65px,0.01px);">Gebruikt</div>
<div class="t" style="top:135px;font-size:5.31px;line-height:6.37px;color:#6a6a6a;font-weight:400;-webkit-text-stroke:0.08px #6a6a6a;left:204.00px;transform:perspective(500px) translate3d(0,0.91px,0.01px);">729,91 GB</div>
<svg class="L" width="690" height="441" viewBox="0 0 690 441"><rect x="348.10" y="127.20" width="3.80" height="3.80" rx="0.90" fill="#9b9b9b" stroke="#7a7a7a" stroke-width="0.6"/></svg>
<div class="t" style="top:126px;font-size:5.5px;line-height:6.60px;color:#111;font-weight:700;-webkit-text-stroke:0.08px #111;left:355.65px;transform:perspective(500px) translate3d(0,0.65px,0.01px);">Andere volumes</div>
<div class="t" style="top:135px;font-size:5.31px;line-height:6.37px;color:#6a6a6a;font-weight:400;-webkit-text-stroke:0.08px #6a6a6a;left:355.65px;transform:perspective(500px) translate3d(0,0.91px,0.01px);">485,2 MB</div>
<svg class="L" width="690" height="441" viewBox="0 0 690 441"><rect x="499.30" y="127.20" width="4.00" height="4.00" rx="2.00" fill="#fff" stroke="#d2d2d2" stroke-width="0.6"/></svg>
<div class="t" style="top:126px;font-size:5.5px;line-height:6.60px;color:#111;font-weight:700;-webkit-text-stroke:0.08px #111;left:506.90px;transform:perspective(500px) translate3d(0,0.65px,0.01px);">Beschikbaar</div>
<div class="t" style="top:135px;font-size:5.31px;line-height:6.37px;color:#6a6a6a;font-weight:400;-webkit-text-stroke:0.08px #6a6a6a;left:506.90px;transform:perspective(500px) translate3d(0,0.91px,0.01px);">3,27 TB</div>
<svg class="L" width="690" height="441" viewBox="0 0 690 441"><rect x="195.60" y="154.55" width="451.70" height="59.00" rx="1.70" fill="none" stroke="#dfdfdf" stroke-width="0.6"/><rect x="420.10" y="158.50" width="0.60" height="50.00" rx="0.00" fill="#e2e2e2"/></svg>
<div class="t" style="top:158px;font-size:5.72px;line-height:6.86px;color:#161616;font-weight:400;-webkit-text-stroke:0.08px #161616;left:199.60px;transform:perspective(500px) translate3d(0,0.82px,0.01px);">Activeringspunt:</div>
<div class="t" style="top:158px;font-size:5.72px;line-height:6.86px;color:#161616;font-weight:400;-webkit-text-stroke:0.08px #161616;right:273.70px;text-align:right;transform:perspective(500px) translate3d(0,0.82px,0.01px);">/Volumes/JBOD</div>
<div class="t" style="top:158px;font-size:5.72px;line-height:6.86px;color:#161616;font-weight:400;-webkit-text-stroke:0.08px #161616;left:426.20px;transform:perspective(500px) translate3d(0,0.82px,0.01px);">Type:</div>
<div class="t" style="top:158px;font-size:5.72px;line-height:6.86px;color:#161616;font-weight:400;-webkit-text-stroke:0.08px #161616;right:47.20px;text-align:right;transform:perspective(500px) translate3d(0,0.82px,0.01px);">APFS-volume</div>
<div class="t" style="top:173px;font-size:5.72px;line-height:6.86px;color:#161616;font-weight:400;-webkit-text-stroke:0.08px #161616;left:199.60px;transform:perspective(500px) translate3d(0,0.87px,0.01px);">Capaciteit:</div>
<div class="t" style="top:173px;font-size:5.72px;line-height:6.86px;color:#161616;font-weight:400;-webkit-text-stroke:0.08px #161616;right:273.70px;text-align:right;transform:perspective(500px) translate3d(0,0.87px,0.01px);">4 TB</div>
<div class="t" style="top:173px;font-size:5.72px;line-height:6.86px;color:#161616;font-weight:400;-webkit-text-stroke:0.08px #161616;left:426.20px;transform:perspective(500px) translate3d(0,0.87px,0.01px);">Eigenaren:</div>
<div class="t" style="top:173px;font-size:5.72px;line-height:6.86px;color:#161616;font-weight:400;-webkit-text-stroke:0.08px #161616;right:47.20px;text-align:right;transform:perspective(500px) translate3d(0,0.87px,0.01px);">Uitgeschakeld</div>
<div class="t" style="top:188px;font-size:5.72px;line-height:6.86px;color:#161616;font-weight:400;-webkit-text-stroke:0.08px #161616;left:199.60px;transform:perspective(500px) translate3d(0,0.87px,0.01px);">Beschikbaar:</div>
<div class="t" style="top:188px;font-size:5.72px;line-height:6.86px;color:#161616;font-weight:400;-webkit-text-stroke:0.08px #161616;right:273.70px;text-align:right;transform:perspective(500px) translate3d(0,0.87px,0.01px);">3,27 TB (201 KB wisbaar)</div>
<div class="t" style="top:188px;font-size:5.72px;line-height:6.86px;color:#161616;font-weight:400;-webkit-text-stroke:0.08px #161616;left:426.20px;transform:perspective(500px) translate3d(0,0.87px,0.01px);">Verbinding:</div>
<div class="t" style="top:188px;font-size:5.72px;line-height:6.86px;color:#161616;font-weight:400;-webkit-text-stroke:0.08px #161616;right:47.20px;text-align:right;transform:perspective(500px) translate3d(0,0.87px,0.01px);">USB</div>
<div class="t" style="top:203px;font-size:5.72px;line-height:6.86px;color:#161616;font-weight:400;-webkit-text-stroke:0.08px #161616;left:199.60px;transform:perspective(500px) translate3d(0,0.77px,0.01px);">Gebruikt:</div>
<div class="t" style="top:203px;font-size:5.72px;line-height:6.86px;color:#161616;font-weight:400;-webkit-text-stroke:0.08px #161616;right:273.70px;text-align:right;transform:perspective(500px) translate3d(0,0.77px,0.01px);">729,91 GB</div>
<div class="t" style="top:203px;font-size:5.72px;line-height:6.86px;color:#161616;font-weight:400;-webkit-text-stroke:0.08px #161616;left:426.20px;transform:perspective(500px) translate3d(0,0.77px,0.01px);">Apparaat:</div>
<div class="t" style="top:203px;font-size:5.72px;line-height:6.86px;color:#161616;font-weight:400;-webkit-text-stroke:0.08px #161616;right:47.20px;text-align:right;transform:perspective(500px) translate3d(0,0.77px,0.01px);">disk23s1</div>
<svg class="L" width="690" height="441" viewBox="0 0 690 441"><rect x="199.60" y="169.00" width="216.50" height="0.60" rx="0.00" fill="#e7e7e7"/><rect x="426.00" y="169.00" width="216.80" height="0.60" rx="0.00" fill="#e7e7e7"/><rect x="199.60" y="184.00" width="216.50" height="0.60" rx="0.00" fill="#e7e7e7"/><rect x="426.00" y="184.00" width="216.80" height="0.60" rx="0.00" fill="#e7e7e7"/><rect x="199.60" y="199.00" width="216.50" height="0.60" rx="0.00" fill="#e7e7e7"/><rect x="426.00" y="199.00" width="216.80" height="0.60" rx="0.00" fill="#e7e7e7"/></svg>
<div class="t" style="top:226px;font-size:6.42px;line-height:7.70px;color:#161616;font-weight:400;-webkit-text-stroke:0.08px #161616;left:195.30px;transform:perspective(500px) translate3d(0,0.05px,0.01px);">APFS-momentopnamen</div>
<svg class="L" width="690" height="441" viewBox="0 0 690 441"><rect x="195.10" y="237.00" width="452.50" height="139.80" rx="0.00" fill="#fff"/><rect x="195.10" y="259.43" width="452.50" height="9.13" rx="0.00" fill="#f4f5f5"/><rect x="195.10" y="277.69" width="452.50" height="9.13" rx="0.00" fill="#f4f5f5"/><rect x="195.10" y="295.95" width="452.50" height="9.13" rx="0.00" fill="#f4f5f5"/><rect x="195.10" y="314.21" width="452.50" height="9.13" rx="0.00" fill="#f4f5f5"/><rect x="195.10" y="332.47" width="452.50" height="9.13" rx="0.00" fill="#f4f5f5"/><rect x="195.10" y="350.73" width="452.50" height="9.13" rx="0.00" fill="#f4f5f5"/><rect x="195.10" y="368.99" width="452.50" height="7.81" rx="0.00" fill="#f4f5f5"/><rect x="195.40" y="237.30" width="451.90" height="139.20" rx="0.00" fill="none" stroke="#e9e9e9" stroke-width="0.6"/><rect x="195.10" y="250.00" width="452.50" height="0.60" rx="0.00" fill="#e6e6e6"/></svg>
<div class="t" style="top:241px;font-size:5.6px;line-height:6.72px;color:#161616;font-weight:400;-webkit-text-stroke:0.08px #161616;left:199.60px;transform:perspective(500px) translate3d(0,0.04px,0.01px);">Naam</div>
<div class="t" style="top:241px;font-size:5.6px;line-height:6.72px;color:#161616;font-weight:400;-webkit-text-stroke:0.08px #161616;left:386.00px;transform:perspective(500px) translate3d(0,0.04px,0.01px);">Aanmaakdatum</div>
<div class="t" style="top:241px;font-size:5.6px;line-height:6.72px;color:#161616;font-weight:400;-webkit-text-stroke:0.08px #161616;left:462.50px;transform:perspective(500px) translate3d(0,0.04px,0.01px);">Beschikbaarheidsmarkering</div>
<div class="t" style="top:240px;font-size:5.9px;line-height:7.08px;color:#161616;font-weight:400;-webkit-text-stroke:0.08px #161616;left:546.20px;transform:perspective(500px) translate3d(0,0.86px,0.01px);">Grootte</div>
<div class="t" style="top:240px;font-size:5.7px;line-height:6.84px;color:#161616;font-weight:400;-webkit-text-stroke:0.08px #161616;left:583.40px;transform:perspective(500px) translate3d(0,0.98px,0.01px);">Soort</div>
<svg class="L" width="690" height="441" viewBox="0 0 690 441"><rect x="381.70" y="239.80" width="0.60" height="8.00" rx="0.00" fill="#e9e9e9"/><rect x="458.70" y="239.80" width="0.60" height="8.00" rx="0.00" fill="#e9e9e9"/><rect x="542.20" y="239.80" width="0.60" height="8.00" rx="0.00" fill="#e9e9e9"/><rect x="578.70" y="239.80" width="0.60" height="8.00" rx="0.00" fill="#e9e9e9"/><rect x="194.90" y="380.85" width="14.90" height="9.60" rx="2.6" fill="#000" opacity="0.27" filter="url(#bsh)"/><rect x="194.70" y="380.10" width="15.30" height="10.00" rx="2.8000000000000003" fill="#000" opacity="0.07"/><rect x="194.90" y="380.30" width="14.90" height="9.60" rx="2.60" fill="#fff"/><rect x="199.95" y="384.75" width="5.30" height="0.85" rx="0.40" fill="#d3d3d3"/><rect x="213.90" y="380.85" width="21.30" height="9.60" rx="2.6" fill="#000" opacity="0.27" filter="url(#bsh)"/><rect x="213.70" y="380.10" width="21.70" height="10.00" rx="2.8000000000000003" fill="#000" opacity="0.07"/><rect x="213.90" y="380.30" width="21.30" height="9.60" rx="2.60" fill="#fff"/><g transform="translate(218.300 381.900) scale(1.0000 1.0000)"><circle cx="3.2" cy="3.2" r="2.75" fill="none" stroke="#2c2c2c" stroke-width="0.8"/><circle cx="1.95" cy="3.2" r="0.42" fill="#2c2c2c"/><circle cx="3.2" cy="3.2" r="0.42" fill="#2c2c2c"/><circle cx="4.45" cy="3.2" r="0.42" fill="#2c2c2c"/></g><g transform="translate(228.300 384.350) scale(1.0000 1.0000)"><path d="M0 0 L1.6 1.7 L3.2 0" fill="none" stroke="#222" stroke-width="1.25" stroke-linecap="round" stroke-linejoin="round"/></g></svg>
<div class="t" style="top:381px;font-size:5.7px;line-height:6.84px;color:#161616;font-weight:400;-webkit-text-stroke:0.08px #161616;left:321.00px;width:200px;text-align:center;transform:perspective(500px) translate3d(0,0.93px,0.01px);">0 momentopnamen</div>
</div></body></html>
